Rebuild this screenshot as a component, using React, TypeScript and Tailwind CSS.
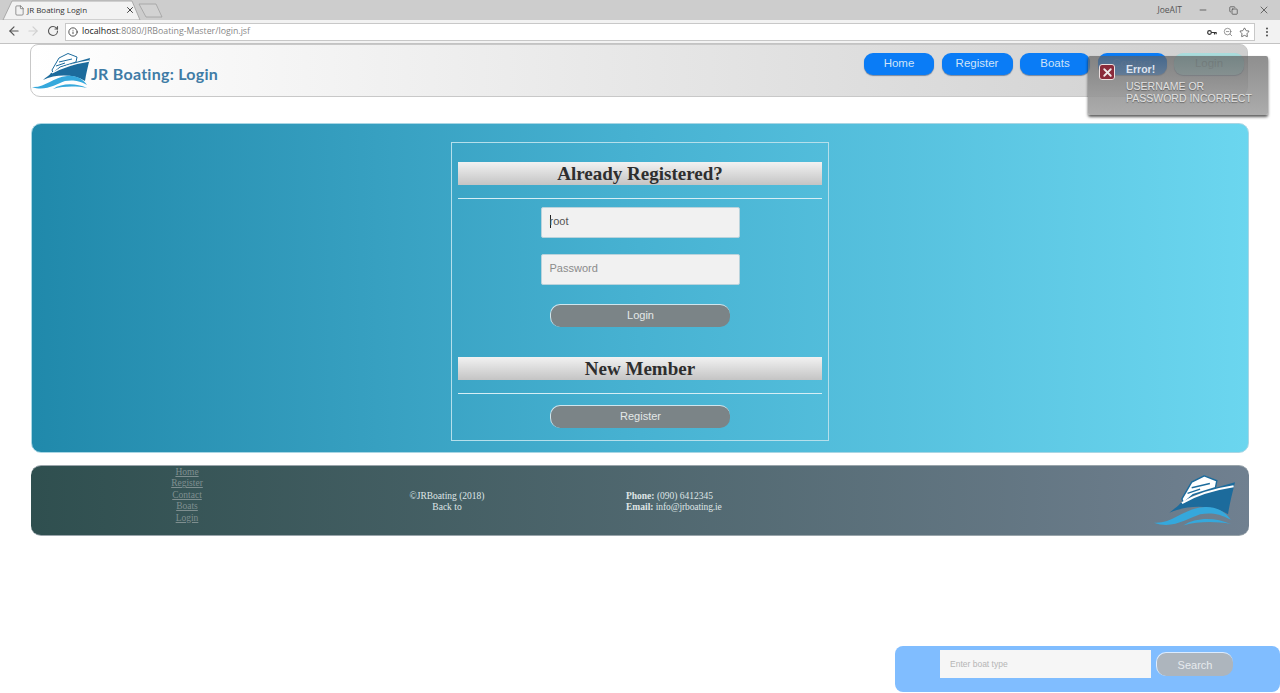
import React from "react";
import { ArrowLeft, ArrowRight, RotateCw, Info, ZoomOut, Star, MoreVertical, File, X, Minus, Copy } from "lucide-react";

function Logo({ className }: { className: string }) {
  return (
    <svg viewBox="0 0 58 37" className={className}>
      <path d="M36 0.5 L45 4 L44 9 L28 14 L21 20 L20 17 L27 5 Z" fill="#ffffff" stroke="#1c6b9c" strokeWidth="1" />
      <path d="M27 9 L40 6 M24 13 L33 10" fill="none" stroke="#1c6b9c" strokeWidth="1" />
      <path d="M19 20 L44 9 L58 5 C56 13 54 21 53 28 C42 21 24 21 11 27 C14 24 17 23 19 20 Z" fill="#1c6b9c" />
      <path d="M20 20 C32 13 44 10 57 8" fill="none" stroke="#ffffff" strokeWidth="1.4" />
      <path d="M0 34 C13 35 21 24 35 23 C44 22 51 26 55 32 C46 27 40 27 33 28 C24 31 13 39 0 34 Z" fill="#35a8dc" />
      <path d="M21 36 C30 30 44 30 55 35 C44 33 32 33 21 36 Z" fill="#35a8dc" />
    </svg>
  );
}

function NavBtn({ label, className }: { label: string; className: string }) {
  return (
    <a className={`h-[22px] rounded-[9px] text-center text-[11.5px] leading-[20px] [box-shadow:0_1px_1px_rgba(40,70,110,0.55)] ${className}`}>
      {label}
    </a>
  );
}

function Heading({ children }: { children: React.ReactNode }) {
  return (
    <div className="mx-[6px] h-[23px] bg-gradient-to-b from-[#f2f2f2] to-[#c4c4c4] text-center font-['Liberation_Serif',serif] text-[19px] leading-[23px] font-bold text-[#2e2e2e]">
      {children}
    </div>
  );
}

function GreyBtn({ label }: { label: string }) {
  return (
    <button className="mx-auto block h-[23px] w-[180px] rounded-[10px] border-t border-l border-[#cfe6ee] bg-[#7b8487] text-center text-[11px] leading-[19px] text-[#e4e8e8]">
      <span className="relative -top-[1px]">{label}</span>
    </button>
  );
}

export default function App() {
  return (
    <div className="relative h-[693px] w-[1280px] overflow-hidden bg-white font-['Liberation_Sans',sans-serif]">
      {/* browser tab strip */}
      <div className="relative flex h-[20px] items-center bg-[#cdcdcd]">
        <svg viewBox="0 0 170 20" className="absolute top-0 left-0 h-[20px] w-[170px]">
          <path d="M3 20 L12 1 H132 L140 20 Z" fill="#f2f2f2" stroke="#9c9c9c" strokeWidth="0.8" />
          <path d="M139 4 H156 L162 17 H146 Z" fill="#d2d2d2" stroke="#a0a0a0" strokeWidth="0.8" />
        </svg>
        <div className="relative ml-[14px] flex w-[120px] items-center">
          <File size={11} strokeWidth={1.3} className="text-[#555]" />
          <span className="ml-[2px] font-['Open_Sans',sans-serif] text-[8px] text-[#333]">JR Boating Login</span>
          <X size={10} strokeWidth={2.4} className="ml-auto mr-[-1px] text-[#444]" />
        </div>
        <span className="ml-auto mr-[16px] font-['Open_Sans',sans-serif] text-[8.5px] text-[#555]">JoeAIT</span>
        <Minus size={10} strokeWidth={1.8} className="text-[#444]" />
        <Copy size={9} strokeWidth={1.8} className="ml-[21px] text-[#444]" />
        <X size={12} strokeWidth={1.5} className="ml-[20px] mr-[10px] text-[#444]" />
      </div>
      {/* toolbar */}
      <div className="flex h-[24px] items-start border-b border-[#c3c3c3] bg-[#f2f2f2] pt-[3px]">
        <ArrowLeft size={14} strokeWidth={2} className="ml-[7px] mt-[1px] text-[#555]" />
        <ArrowRight size={14} strokeWidth={2} className="ml-[5px] mt-[1px] text-[#d0d0d0]" />
        <RotateCw size={12} strokeWidth={2.2} className="ml-[7px] mt-[2px] text-[#555]" />
        <div className="ml-[6px] flex h-[18px] w-[1190px] items-center border border-[#c8c8c8] bg-white pl-[2px] pr-[4px]">
          <Info size={10} strokeWidth={2} className="text-[#333]" />
          <span className="ml-[4px] font-['Open_Sans',sans-serif] text-[8.8px] text-[#222]">localhost</span>
          <span className="font-['Open_Sans',sans-serif] text-[8.8px] text-[#888]">:8080/JRBoating-Master/login.jsf</span>
          <svg viewBox="0 0 12 8" className="ml-auto h-[7px] w-[10px]">
            <circle cx="3" cy="4" r="2.2" fill="none" stroke="#333" strokeWidth="1.4" />
            <path d="M5 4 H11.5 M9 4 V6.5 M11 4 V6" stroke="#333" strokeWidth="1.4" fill="none" />
          </svg>
          <ZoomOut size={10} strokeWidth={1.6} className="ml-[6px] text-[#666]" />
          <Star size={11} strokeWidth={1.6} className="ml-[6px] text-[#444]" />
        </div>
        <MoreVertical size={12} strokeWidth={2.2} className="ml-[6px] mt-[3px] text-[#555]" />
      </div>

      {/* page header */}
      <header className="ml-[30px] flex h-[53px] w-[1218px] rounded-b-[10px] rounded-t-[8px] border border-[#c8c8c8] bg-gradient-to-r from-white to-[#cfcfcf]">
        <Logo className="mt-[8px] ml-[1px] h-[37px] w-[58px]" />
        <h1 className="ml-[1px] mt-[19px] font-['Lato',sans-serif] text-[16px] leading-[20px] font-bold tracking-[0.25px] text-[#3f7ca6]">
          JR Boating: Login
        </h1>
        <nav className="ml-auto mt-[8px] mr-[3px] flex gap-[7.5px]">
          <NavBtn label="Home" className="w-[70px] bg-[#0a7cf6] text-[#cfe3f8]" />
          <NavBtn label="Register" className="w-[71px] bg-[#0a7cf6] text-[#cfe3f8]" />
          <NavBtn label="Boats" className="w-[70px] bg-[#0a7cf6] text-[#cfe3f8]" />
          <NavBtn label="Contact" className="w-[69px] bg-[#0a7cf6] text-[#2f86ec]" />
          <NavBtn label="Login" className="w-[70px] bg-[#a9dcdc] text-[#8aa]" />
        </nav>
      </header>

      {/* main panel */}
      <main className="mt-[26px] ml-[31px] h-[330px] w-[1218px] rounded-[10px] border border-[#a9d6e4] bg-gradient-to-r from-[#2089ab] via-[#47b2d2] to-[#6bd6ef] pt-[18px]">
        <div className="mx-auto h-[299px] w-[378px] border border-[#b5dfeb] pt-[19px]">
          <Heading>Already Registered?</Heading>
          <div className="mx-[6px] mt-[13px] h-px bg-[#d6eef5]" />
          <div className="mx-auto mt-[8px] flex h-[31px] w-[199px] items-center rounded-[2px] border border-[#b9d3dc] bg-[#f1f1f1] pb-[2px] pl-[8px] text-[11px] text-[#555]">
            <span className="mr-[-1px] h-[13px] w-px bg-[#222]" />
            root
          </div>
          <div className="mx-auto mt-[16px] flex h-[31px] w-[199px] items-center rounded-[2px] border border-[#b9d3dc] bg-[#f1f1f1] pb-[2px] pl-[8px] text-[11px] text-[#8b8b8b]">
            Password
          </div>
          <div className="mt-[19px]">
            <GreyBtn label="Login" />
          </div>
          <div className="mt-[30px]">
            <Heading>New Member</Heading>
          </div>
          <div className="mx-[6px] mt-[13px] h-px bg-[#d6eef5]" />
          <div className="mt-[11px]">
            <GreyBtn label="Register" />
          </div>
        </div>
      </main>

      {/* footer */}
      <footer className="mt-[12px] ml-[31px] flex h-[71px] w-[1218px] items-center rounded-[10px] border-t border-b border-[#9aa5ab] bg-gradient-to-r from-[#2f4f4f] to-[#708090] font-['Liberation_Serif',serif] text-[9.5px] leading-[11.4px] text-[#dfe5e6]">
        <div className="mb-[10px] w-[312px] text-center text-[#7f8f90] underline">
          <div>Home</div>
          <div>Register</div>
          <div>Contact</div>
          <div>Boats</div>
          <div>Login</div>
        </div>
        <div className="w-[208px] pt-[3px] text-center">
          <div>©JRBoating (2018)</div>
          <div>Back to</div>
        </div>
        <div className="ml-[75px] pt-[3px]">
          <div><b>Phone:</b> (090) 6412345</div>
          <div><b>Email:</b> <span className="tracking-[-0.1px]">info@jrboating.ie</span></div>
        </div>
        <Logo className="ml-auto mr-[14px] h-[52px] w-[81px]" />
      </footer>

      {/* error growl */}
      <div className="absolute top-[56px] left-[1088px] h-[59px] w-[180px] rounded-[2px] bg-gradient-to-b from-[#5f5f5f]/70 to-[#a8a8a8]/95 [box-shadow:0_2px_3px_rgba(0,0,0,0.65)]">
        <div className="absolute top-[8px] left-[11px] flex h-[16px] w-[16px] items-center justify-center rounded-[3px] border border-[#eadede] bg-[#8a2a3a]">
          <X size={13} strokeWidth={3.4} className="text-[#f0e8e8]" />
        </div>
        <div className="pl-[38px] pt-[6px]">
          <div className="text-[10.5px] leading-[15px] font-bold text-[#dde4f0]">Error!</div>
          <div className="mt-[3px] text-[10.5px] leading-[12.3px] text-[#e2e2e2] [text-shadow:0_1px_1px_rgba(60,60,60,0.6)]">USERNAME OR<br />PASSWORD INCORRECT</div>
        </div>
      </div>

      {/* search bar */}
      <div className="absolute top-[646px] left-[895px] flex h-[46px] w-[385px] items-start rounded-[8px] bg-[#80bdff] pt-[4px] pl-[45px]">
        <div className="flex h-[28px] w-[211px] items-center bg-[#f6f6f6] pl-[10px] text-[8.5px] text-[#b5b5b5]">Enter boat type</div>
        <button className="mt-[2px] ml-[5px] h-[24px] w-[77px] rounded-[10px] border-t border-l border-[#dcecff] bg-[#adb5bd] text-center text-[11px] leading-[18px] text-[#e6eaee]">Search</button>
      </div>
    </div>
  );
}
